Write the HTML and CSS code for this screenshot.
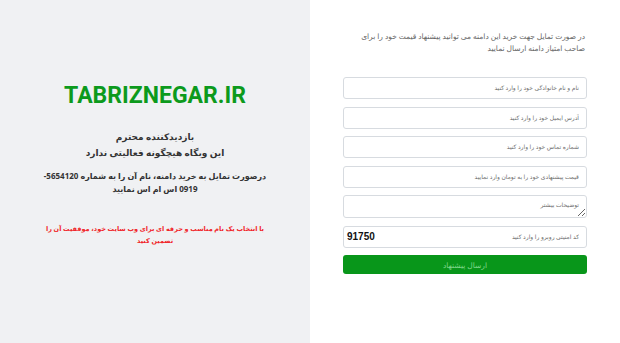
FILE: index.html
```html
<!DOCTYPE html>
<html lang="fa" dir="rtl">

<head>
    <meta charset="UTF-8">
    <meta name="viewport" content="width=device-width, initial-scale=1.0">
    <title>TABRIZNEGAR.IR</title>
    <link rel="stylesheet" href="styles.css">
</head>

<body>
    <div class="page">
        <!-- Offer Form -->
        <div class="form-side">
            <p class="intro">در صورت تمایل جهت خرید این دامنه می توانید پیشنهاد قیمت خود را برای<br>صاحب امتیاز دامنه ارسال نمایید</p>
            <form class="offer-form">
                <input type="text" class="field" placeholder="نام و نام خانوادگی خود را وارد کنید">
                <input type="text" class="field" placeholder="آدرس ایمیل خود را وارد کنید">
                <input type="text" class="field" placeholder="شماره تماس خود را وارد کنید">
                <input type="text" class="field" placeholder="قیمت پیشنهادی خود را به تومان وارد نمایید">
                <textarea class="field area" placeholder="توضیحات بیشتر"></textarea>
                <div class="field captcha">
                    <input type="text" placeholder="کد امنیتی روبرو را وارد کنید">
                    <span class="code">91750</span>
                </div>
                <button type="button" class="send">ارسال پیشنهاد</button>
            </form>
        </div>

        <!-- Domain Info -->
        <div class="info-side">
            <h1 class="domain">TABRIZNEGAR.IR</h1>
            <p class="notice">بازدیدکننده محترم<br>این وبگاه هیچگونه فعالیتی ندارد</p>
            <p class="notice tight">درصورت تمایل به خرید دامنه، نام آن را به شماره 5654120-<br>0919 اس ام اس نمایید</p>
            <p class="tip">با انتخاب یک نام مناسب و حرفه ای برای وب سایت خود، موفقیت آن را<br>تضمین کنید</p>
        </div>
    </div>
</body>

</html>
```

FILE: styles.css
```css
/* Global Reset */
* {
    margin: 0;
    padding: 0;
    box-sizing: border-box;
}

body {
    font-family: "Noto Sans", "DejaVu Sans", sans-serif;
    background: #ffffff;
}

.page {
    display: flex;
    height: 343px;
}

/* Left Panel (info) */
.info-side {
    width: 310px;
    background: #f0f1f3;
    display: flex;
    flex-direction: column;
    align-items: center;
    text-align: center;
    padding-top: 82px;
}

.domain {
    font-family: Roboto, "Liberation Sans", sans-serif;
    direction: ltr;
    font-size: 23px;
    font-weight: 700;
    color: #0c9a1c;
    margin-bottom: 20px;
}

.notice {
    font-size: 9px;
    font-weight: 700;
    line-height: 16px;
    color: #333;
    margin-bottom: 8px;
}

.notice.tight {
    font-size: 8px;
    line-height: 13px;
}

.tip {
    font-size: 6.5px;
    font-weight: 700;
    line-height: 12px;
    color: #f0262a;
    margin-top: 20px;
}

/* Right Panel (form) */
.form-side {
    flex: 1;
    padding: 30px 35px 0 33px;
}

.intro {
    font-size: 7.5px;
    line-height: 12px;
    color: #666;
    margin-bottom: 23px;
}

.offer-form {
    display: flex;
    flex-direction: column;
    gap: 7.5px;
    margin-right: -2px;
}

.field {
    height: 22px;
    border: 1px solid #d7dbe0;
    border-radius: 3px;
    padding: 0 7px;
    font-family: inherit;
    font-size: 6px;
    color: #444;
    background: #fff;
}

.field::placeholder {
    color: #6e6e6e;
}

.area {
    height: 23px;
    padding-top: 5px;
    direction: ltr;
    text-align: right;
    resize: vertical;
}

.captcha {
    display: flex;
    align-items: center;
}

.captcha input {
    flex: 1;
    border: none;
    outline: none;
    font-family: inherit;
    font-size: 6px;
    background: transparent;
}

.captcha input::placeholder {
    color: #6e6e6e;
}

.code {
    font-family: "Liberation Sans", sans-serif;
    font-weight: 700;
    font-size: 10px;
    color: #111;
    direction: ltr;
    margin-left: -4px;
}

.send {
    height: 19px;
    border: none;
    border-radius: 3px;
    background: #08961a;
    color: #7fd68b;
    font-family: inherit;
    font-size: 7.5px;
}
```
